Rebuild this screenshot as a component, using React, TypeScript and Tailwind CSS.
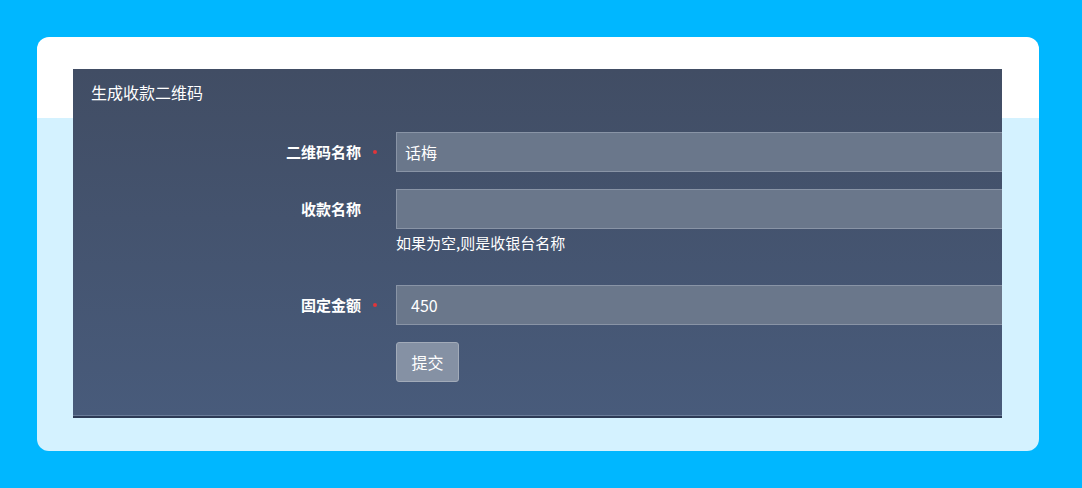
const font = { fontFamily: '"Microsoft YaHei", "Noto Sans CJK SC", "Noto Sans", sans-serif' };

function Row({ label, required, children }: { label: string; required?: boolean; children: React.ReactNode }) {
  return (
    <div className="flex items-start">
      <div className="w-[288px] shrink-0 h-10 flex items-center justify-end text-[15px] font-bold text-white">{label}</div>
      <div className="w-[35px] shrink-0 h-10 flex items-center pl-[12px]">
        {required && <span className="w-[4px] h-[4px] rounded-full bg-[#e0353a]" />}
      </div>
      <div className="flex flex-col shrink-0">{children}</div>
    </div>
  );
}

export default function App() {
  return (
    <div className="w-[1082px] h-[488px] bg-[#00b7ff] pt-[37px] pl-[37px]" style={font}>
      <div className="w-[1002px] h-[414px] rounded-[12px] pt-[32px] pl-[36px] bg-[linear-gradient(to_bottom,#ffffff_0px,#ffffff_81px,#d4f2ff_81px,#d4f2ff_100%)]">
        <div className="w-[929px] h-[349px] overflow-hidden bg-[linear-gradient(to_bottom,#414d64,#485b7b)] border-b-2 border-[#2c3a55] shadow-[inset_0_-1px_0_#6a7c99]">
          <div className="pl-[18px] pt-[11px] h-[63px] text-[16px] text-white">生成收款二维码</div>
          <div className="flex flex-col gap-[17px]">
            <Row label="二维码名称" required>
              <div className="w-[700px] h-10 bg-[#6a778b] border border-[#8994a6] flex items-center pl-[8px] text-[16px] text-white">话梅</div>
            </Row>
            <Row label="收款名称">
              <div className="w-[700px] h-10 bg-[#6a778b] border border-[#8994a6]" />
              <div className="mt-[4px] mb-[15px] text-[15px] text-white leading-5">如果为空,则是收银台名称</div>
            </Row>
            <Row label="固定金额" required>
              <div className="w-[700px] h-10 bg-[#6a778b] border border-[#8994a6] flex items-center pl-[14px] text-[16px] text-white">450</div>
            </Row>
            <Row label="">
              <button className="w-[63px] h-10 rounded-[3px] bg-[#8591a4] border border-[#a2abb9] text-[16px] text-white">提交</button>
            </Row>
          </div>
        </div>
      </div>
    </div>
  );
}
